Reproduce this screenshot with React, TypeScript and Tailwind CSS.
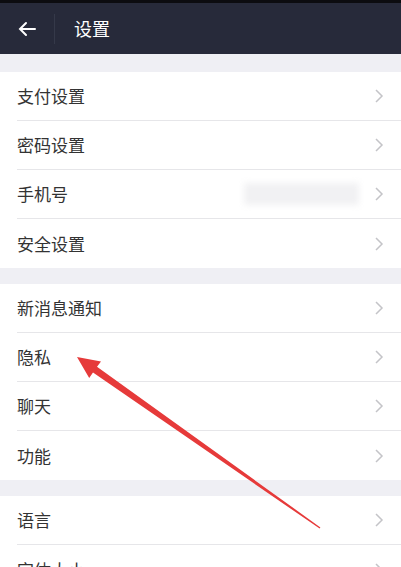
import React from 'react'

const groups: { label: string; extra?: boolean }[][] = [
  [{ label: '支付设置' }, { label: '密码设置' }, { label: '手机号', extra: true }, { label: '安全设置' }],
  [{ label: '新消息通知' }, { label: '隐私' }, { label: '聊天' }, { label: '功能' }],
  [{ label: '语言' }, { label: '字体大小' }],
]

const Chevron = () => (
  <svg width="12" height="16" viewBox="0 0 12 16" className="shrink-0">
    <path d="M3 2 L9 8 L3 14" fill="none" stroke="#c4c4c8" strokeWidth="1.5" />
  </svg>
)

const Row = ({ label, extra, last }: { label: string; extra?: boolean; last: boolean }) => (
  <div className="pl-[17px] bg-white">
    <div className={`h-[49px] flex items-center pr-[16px] ${last ? '' : 'border-b border-[#e6e6e9]'}`}>
      <span className="flex-1 text-[17px] text-[#333]">{label}</span>
      {extra && <div className="w-[115px] h-[22px] mr-[14px] bg-[#f1f1f3] blur-[3px]" />}
      <Chevron />
    </div>
  </div>
)

const App = () => {
  return (
    <div
      className="relative w-[401px] h-[567px] overflow-hidden bg-[#efeff4]"
      style={{ fontFamily: '"Noto Sans CJK SC", "Noto Sans", sans-serif' }}
    >
      <div className="h-[3px] bg-[#0c0c10]" />
      <div className="h-[51px] bg-[#272a3a] flex items-center">
        <svg width="20" height="16" viewBox="0 0 20 16" className="ml-[17px]">
          <path d="M18 8 H3 M9 2 L3 8 L9 14" fill="none" stroke="#fff" strokeWidth="2" strokeLinecap="round" />
        </svg>
        <div className="ml-[17px] w-px h-[30px] bg-[#353949]" />
        <span className="ml-[19px] text-[18px] text-white">设置</span>
      </div>
      <div className="flex flex-col gap-[16px] pt-[18px]">
        {groups.map((g, gi) => (
          <div key={gi}>
            {g.map((r, i) => (
              <Row key={r.label} label={r.label} extra={r.extra} last={i === g.length - 1} />
            ))}
          </div>
        ))}
      </div>
      <svg className="absolute inset-0 pointer-events-none" width="401" height="567">
        <polygon
          points="77,357 101,361.5 97,366.8 320.4,527.4 319.6,528.6 93,372.6 89.2,378"
          fill="#e63a3a"
        />
      </svg>
    </div>
  )
}

export default App
